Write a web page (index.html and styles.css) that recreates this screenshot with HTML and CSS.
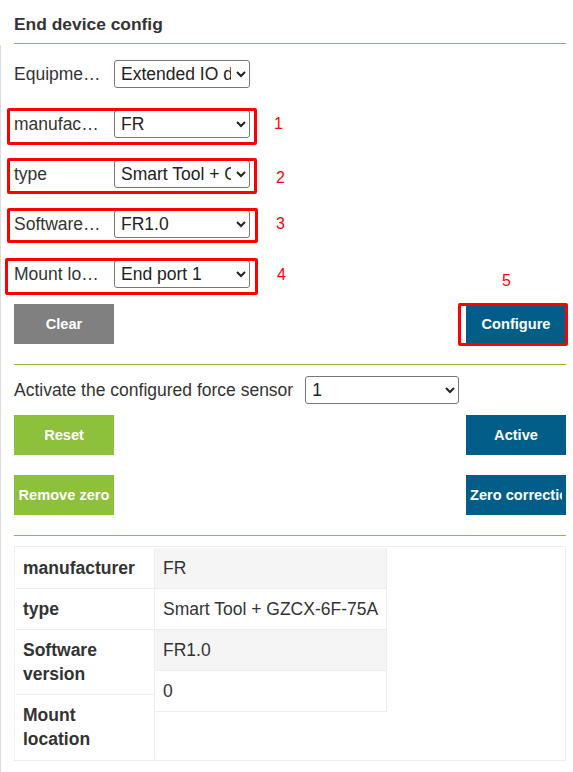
FILE: index.html
```html
<!DOCTYPE html>
<html>
<head>
<meta charset="utf-8">
<link rel="stylesheet" href="styles.css">
</head>
<body>
<div class="page">
  <div class="header">
    <div class="title">End device config</div>
  </div>
  <div class="panel">
    <div class="form">
      <div class="form-row">
        <span class="label">Equipment type</span>
        <select class="sel"><option>Extended IO device</option></select>
      </div>
      <div class="form-row">
        <span class="label">manufacturer</span>
        <select class="sel"><option>FR</option></select>
      </div>
      <div class="form-row">
        <span class="label">type</span>
        <select class="sel"><option>Smart Tool + GZCX-6F-75A</option></select>
      </div>
      <div class="form-row">
        <span class="label">Software version</span>
        <select class="sel"><option>FR1.0</option></select>
      </div>
      <div class="form-row">
        <span class="label">Mount location</span>
        <select class="sel"><option>End port 1</option></select>
      </div>
    </div>
    <div class="btn-row first">
      <button class="btn gray"><span class="btn-text">Clear</span></button>
      <button class="btn blue"><span class="btn-text">Configure</span></button>
    </div>
    <div class="divider"></div>
    <div class="activate-row">
      <span class="activate-label">Activate the configured force sensor</span>
      <select class="sel sel-wide"><option>1</option></select>
    </div>
    <div class="btn-row second">
      <button class="btn green"><span class="btn-text">Reset</span></button>
      <button class="btn blue"><span class="btn-text">Active</span></button>
    </div>
    <div class="btn-row third">
      <button class="btn green"><span class="btn-text">Remove zero</span></button>
      <button class="btn blue"><span class="btn-text">Zero correction</span></button>
    </div>
    <div class="divider last"></div>
    <div class="info">
      <div class="labels">
        <div class="lcell">manufacturer</div>
        <div class="lcell">type</div>
        <div class="lcell">Software version</div>
        <div class="lcell">Mount location</div>
      </div>
      <div class="values">
        <div class="vcell stripe">FR</div>
        <div class="vcell">Smart Tool + GZCX-6F-75A</div>
        <div class="vcell stripe">FR1.0</div>
        <div class="vcell">0</div>
      </div>
    </div>
  </div>

  <div class="mark box1"></div>
  <div class="mark box2"></div>
  <div class="mark box3"></div>
  <div class="mark box4"></div>
  <div class="mark box5"></div>
  <span class="num n1">1</span>
  <span class="num n2">2</span>
  <span class="num n3">3</span>
  <span class="num n4">4</span>
  <span class="num n5">5</span>
</div>
</body>
</html>
```

FILE: styles.css
```css
html, body {
  margin: 0;
  padding: 0;
  background: #ffffff;
}
body {
  font-family: "Liberation Sans", Arial, sans-serif;
  font-size: 17.5px;
  color: #333333;
}
.page {
  position: relative;
  width: 573px;
  height: 772px;
  overflow: hidden;
  display: flex;
  flex-direction: column;
}
.header {
  margin: 0 7px 0 14px;
  padding-top: 14px;
  padding-bottom: 9px;
  border-bottom: 1px solid #8dbf3c;
}
.title {
  font-weight: bold;
  font-size: 17.4px;
  line-height: 20px;
  color: #333333;
}
.panel {
  flex: 1;
  margin-top: 1px;
  border-left: 1px solid #dcdcdc;
  padding: 0 7px 0 13px;
}
.form {
  display: flex;
  flex-direction: column;
  gap: 22px;
  padding-top: 15px;
}
.form-row {
  display: flex;
  align-items: center;
  height: 28px;
}
.label {
  width: 88px;
  margin-right: 12px;
  white-space: nowrap;
  overflow: hidden;
  text-overflow: ellipsis;
  line-height: 22px;
}
.sel {
  box-sizing: border-box;
  width: 136px;
  height: 28px;
  font-family: "Liberation Sans", Arial, sans-serif;
  font-size: 17.5px;
  color: #222222;
  background: #ffffff;
  border: 1px solid #767676;
  border-radius: 3px;
  padding: 0 2px;
  margin: 0;
}
.sel-wide {
  width: 154px;
  margin-left: 12px;
}
.btn-row {
  display: flex;
  justify-content: space-between;
  height: 40px;
}
.btn-row.first { margin-top: 16px; }
.btn-row.second { margin-top: 11px; }
.btn-row.third { margin-top: 20px; }
.btn {
  box-sizing: border-box;
  width: 100px;
  height: 40px;
  border: none;
  border-radius: 0;
  padding: 0 4px;
  margin: 0;
  overflow: hidden;
  color: #ffffff;
  font-family: "Liberation Sans", Arial, sans-serif;
  font-weight: bold;
  font-size: 14.6px;
}
.btn-text {
  display: block;
  width: 92px;
  text-align: center;
  white-space: nowrap;
  overflow: hidden;
}
.gray { background: #808080; }
.blue { background: #025e89; }
.green { background: #8dc03b; }
.divider {
  height: 1px;
  background: #8dbf3c;
  margin-top: 20px;
}
.activate-row {
  display: flex;
  align-items: center;
  height: 28px;
  margin-top: 11px;
}
.activate-label {
  white-space: nowrap;
  line-height: 22px;
}
.info {
  margin-top: 10px;
  border: 1px solid #eeeeee;
  padding: 1px;
  display: flex;
  align-items: flex-start;
}
.labels {
  width: 138px;
  border-right: 1px solid #eeeeee;
}
.lcell {
  padding: 8px 10px 8px 7px;
  line-height: 24px;
  font-weight: bold;
  border-bottom: 1px solid #eeeeee;
}
.lcell:last-child {
  border-bottom: none;
}
.values {
  width: 231px;
  border-right: 1px solid #eeeeee;
}
.vcell {
  padding: 8px 8px;
  line-height: 24px;
  white-space: nowrap;
  border-bottom: 1px solid #eeeeee;
}
.stripe {
  background: #f5f5f5;
}
.mark {
  position: absolute;
  box-sizing: border-box;
  border: 3px solid #ff0000;
  border-radius: 2px;
}
.box1 { left: 7px; top: 108px; width: 250px; height: 37px; }
.box2 { left: 7px; top: 158px; width: 250px; height: 36px; }
.box3 { left: 7px; top: 208px; width: 251px; height: 35px; }
.box4 { left: 5px; top: 258px; width: 253px; height: 37px; }
.box5 { left: 458px; top: 303px; width: 110px; height: 43px; }
.num {
  position: absolute;
  color: #ff0000;
  font-family: "Liberation Sans", Arial, sans-serif;
  font-size: 16px;
  line-height: 18px;
}
.n1 { left: 274px; top: 115px; }
.n2 { left: 276px; top: 169px; }
.n3 { left: 276px; top: 215px; }
.n4 { left: 277px; top: 266px; }
.n5 { left: 502px; top: 272px; }
```
